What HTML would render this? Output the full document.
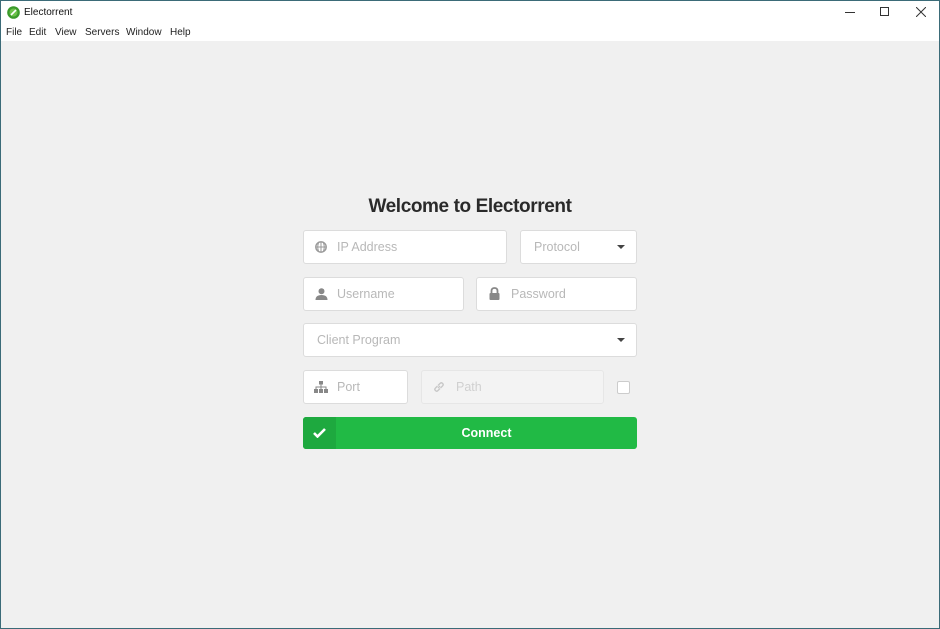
<!DOCTYPE html>
<html><head><meta charset="utf-8"><style>
*{box-sizing:border-box;margin:0;padding:0}
body{width:940px;height:629px;overflow:hidden;background:#f0f0f0;font-family:"Liberation Sans",sans-serif;position:relative}
.frame{position:absolute;inset:0;border:1px solid #3b6b78;}
.title{position:absolute;left:1px;top:1px;right:1px;height:22px;background:#fff}
.menu{position:absolute;left:1px;top:23px;right:1px;height:18px;background:#fff;font-size:10px;color:#222}
.menu span{position:absolute;top:4px}
.box{position:absolute;background:#fff;border:1px solid #dcdcdc;border-radius:3px;height:34px;font-size:12.5px;color:#b8b8b8;line-height:32px}
.box .t{position:absolute;top:0}
.caret{position:absolute;right:11px;top:14px;width:0;height:0;border-left:4px solid transparent;border-right:4px solid transparent;border-top:4px solid #444}
.ic{position:absolute;top:10px}
</style></head><body>
<div class="frame"></div>
<div class="title">
<svg style="position:absolute;left:6px;top:5px" width="13" height="13" viewBox="0 0 13 13"><circle cx="6.5" cy="6.5" r="6.3" fill="#3a9a2a"/><circle cx="6.5" cy="6.5" r="4" fill="#6cc24a"/><path d="M4 9 L9 4" stroke="#fff" stroke-width="1.6"/></svg>
<span style="position:absolute;left:23px;top:6px;font-size:10px;color:#111">Electorrent</span>
<div style="position:absolute;left:844px;top:11px;width:10px;height:1px;background:#333"></div>
<div style="position:absolute;left:879px;top:6px;width:9px;height:9px;border:1px solid #333"></div>
<svg style="position:absolute;left:915px;top:6px" width="10" height="10"><path d="M0 0L10 10M10 0L0 10" stroke="#333" stroke-width="1"/></svg>
</div>
<div class="menu"><span style="left:5px">File</span><span style="left:28px">Edit</span><span style="left:54px">View</span><span style="left:84px">Servers</span><span style="left:125px">Window</span><span style="left:169px">Help</span></div>

<div style="position:absolute;left:0;width:940px;top:196px;text-align:center;font-size:19px;letter-spacing:-0.4px;font-weight:bold;color:#2a2a2a">Welcome to Electorrent</div>

<div class="box" style="left:303px;top:230px;width:204px"><svg class="ic" style="left:11px;top:10px" width="12" height="12" viewBox="0 0 12 12"><circle cx="6" cy="6" r="5.2" fill="none" stroke="#999" stroke-width="1.4"/><path d="M1 6H11M6 1V11M3.5 2Q2 6 3.5 10M8.5 2Q10 6 8.5 10" stroke="#999" fill="none"/></svg><span class="t" style="left:33px">IP Address</span></div>
<div class="box" style="left:520px;top:230px;width:117px"><span class="t" style="left:13px">Protocol</span><div class="caret"></div></div>

<div class="box" style="left:303px;top:277px;width:161px"><svg class="ic" style="left:11px;top:10px" width="13" height="12" viewBox="0 0 13 12"><circle cx="6.5" cy="3.3" r="3" fill="#888"/><path d="M0.5 12Q0.5 7 6.5 7Q12.5 7 12.5 12Z" fill="#888"/></svg><span class="t" style="left:33px">Username</span></div>
<div class="box" style="left:476px;top:277px;width:161px"><svg class="ic" style="left:12px;top:9px" width="11" height="13" viewBox="0 0 11 13"><path d="M2.5 6V4Q2.5 1 5.5 1Q8.5 1 8.5 4V6" stroke="#888" stroke-width="1.8" fill="none"/><rect x="0.5" y="6" width="10" height="7" rx="1" fill="#888"/></svg><span class="t" style="left:34px">Password</span></div>

<div class="box" style="left:303px;top:323px;width:334px"><span class="t" style="left:13px">Client Program</span><div class="caret"></div></div>

<div class="box" style="left:303px;top:370px;width:105px"><svg class="ic" style="left:10px;top:10px" width="14" height="12" viewBox="0 0 14 12"><rect x="5" y="0" width="4" height="3.5" fill="#888"/><path d="M7 3.5V6M2 8V6H12V8M7 6V8" stroke="#888" fill="none"/><rect x="0" y="8" width="4" height="4" fill="#888"/><rect x="5" y="8" width="4" height="4" fill="#888"/><rect x="10" y="8" width="4" height="4" fill="#888"/></svg><span class="t" style="left:33px">Port</span></div>
<div class="box" style="left:421px;top:370px;width:183px;background:#f3f3f3;border-color:#e6e6e6;color:#d0d0d0"><svg class="ic" style="left:11px;top:10px" width="12" height="12" viewBox="0 0 12 12"><path d="M5 7L7 5M4.5 5L2.5 7Q1 8.5 2.5 9.5Q3.5 11 5 9.5L7 7.5M7.5 7L9.5 5Q11 3.5 9.5 2.5Q8.5 1 7 2.5L5 4.5" stroke="#c8c8c8" stroke-width="1.4" fill="none"/></svg><span class="t" style="left:34px">Path</span></div>
<div style="position:absolute;left:617px;top:381px;width:13px;height:13px;background:#fff;border:1px solid #ccc;border-radius:2px"></div>

<div style="position:absolute;left:303px;top:417px;width:334px;height:32px;background:#21ba45;border-radius:3px;color:#fff;font-weight:bold;font-size:12.5px;line-height:32px">
<div style="position:absolute;left:0;top:0;width:33px;height:32px;background:#1ea93f;border-radius:3px 0 0 3px"></div>
<svg style="position:absolute;left:10px;top:11px" width="13" height="10" viewBox="0 0 13 10"><path d="M1 5L4.5 8.5L12 1" stroke="#fff" stroke-width="2.6" fill="none"/></svg>
<span style="position:absolute;left:33px;right:0;text-align:center">Connect</span></div>
</body></html>
